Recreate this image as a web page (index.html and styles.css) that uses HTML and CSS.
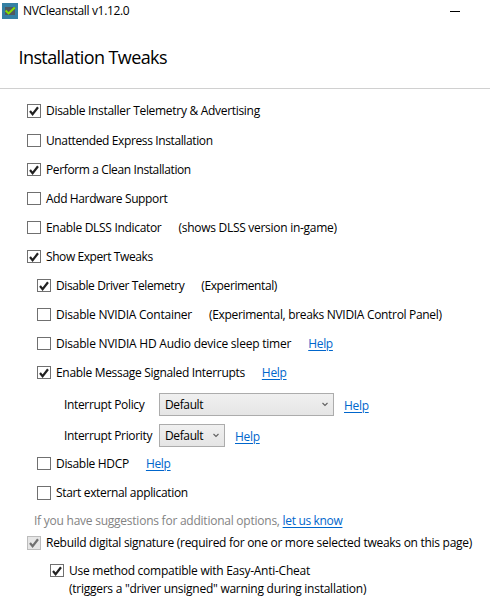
FILE: index.html
```
<!DOCTYPE html>
<html lang="en">
<head>
<meta charset="utf-8">
<title>NVCleanstall v1.12.0</title>
<link rel="stylesheet" href="styles.css">
</head>
<body>
<svg class="defs" width="0" height="0" aria-hidden="true">
  <symbol id="check" viewBox="0 0 12 12"><path d="M2 6 L4.6 9.2 L10 2.3" fill="none" stroke="currentColor" stroke-width="2.2"/></symbol>
  <symbol id="chevron" viewBox="0 0 6 5"><path d="M.5 1 L3 3.5 L5.5 1" fill="none" stroke="currentColor" stroke-width="1.1"/></symbol>
</svg>
<header class="titlebar">
  <svg class="app-icon" viewBox="0 0 16 16">
    <rect width="16" height="16" fill="#3480a4"/>
    <rect x="3" y="4" width="10" height="8" fill="#505860"/>
    <path d="M3.6 7.6 L6.6 10.4 L12.8 4.6" fill="none" stroke="#86e000" stroke-width="2"/>
  </svg>
  <span class="app-name t34">NVCleanstall v1.12.0</span>
  <span class="minimize"></span>
</header>
<h1 class="heading">Installation Tweaks</h1>
<main class="options">
  <div class="row first"><span class="box tall"><svg><use href="#check"/></svg></span><span class="t30">Disable Installer Telemetry &amp; Advertising</span></div>
  <div class="row"><span class="box"></span><span class="t38">Unattended Express Installation</span></div>
  <div class="row"><span class="box"><svg><use href="#check"/></svg></span><span class="t38">Perform a Clean Installation</span></div>
  <div class="row"><span class="box"></span><span class="t38">Add Hardware Support</span></div>
  <div class="row"><span class="box"></span><span class="t31">Enable DLSS Indicator</span><span class="note t28">(shows DLSS version in-game)</span></div>
  <div class="row"><span class="box"><svg><use href="#check"/></svg></span><span class="t42">Show Expert Tweaks</span></div>
  <section class="expert">
    <div class="row"><span class="box"><svg><use href="#check"/></svg></span><span class="t40">Disable Driver Telemetry</span><span class="note t40">(Experimental)</span></div>
    <div class="row"><span class="box"></span><span class="t24">Disable NVIDIA Container</span><span class="note t31">(Experimental, breaks NVIDIA Control Panel)</span></div>
    <div class="row"><span class="box"></span><span class="t22">Disable NVIDIA HD Audio device sleep timer</span><a class="note t31">Help</a></div>
    <div class="row"><span class="box"><svg><use href="#check"/></svg></span><span class="t31">Enable Message Signaled Interrupts</span><a class="note t31">Help</a></div>
    <div class="interrupts">
      <div class="field"><span class="label t34">Interrupt Policy</span><span class="select wide"><span class="t38">Default</span><svg><use href="#chevron"/></svg></span><a class="t31">Help</a></div>
      <div class="field"><span class="label t34">Interrupt Priority</span><span class="select"><span class="t38">Default</span><svg><use href="#chevron"/></svg></span><a class="t31">Help</a></div>
    </div>
    <div class="row"><span class="box"></span><span class="t31">Disable HDCP</span><a class="note t31">Help</a></div>
    <div class="row external"><span class="box tall"></span><span class="t34">Start external application</span></div>
  </section>
  <p class="suggest"><span class="t24">If you have suggestions for additional options, </span><a class="t34">let us know</a></p>
  <div class="row signature"><span class="box tall disabled"><svg><use href="#check"/></svg></span><span class="t28">Rebuild digital signature (required for one or more selected tweaks on this page)</span></div>
  <div class="compat">
    <div class="row"><span class="box"><svg><use href="#check"/></svg></span><span class="t26">Use method compatible with Easy-Anti-Cheat</span></div>
    <p class="t26">(triggers a "driver unsigned" warning during installation)</p>
  </div>
</main>
</body>
</html>
```
FILE: styles.css
```
* { box-sizing: border-box; }
body {
  margin: 0;
  height: 610px;
  overflow: hidden;
  background: #fff;
  color: #000;
  font: 12px/18px "Open Sans", "Noto Sans", sans-serif;
  white-space: nowrap;
}
.defs { display: block; }
p { margin: 0; }
a { color: #0066cc; text-decoration: underline; text-underline-offset: 2px; text-decoration-thickness: 1px; }

/* Letter fitting, in hundredths of a pixel */
.t22 { letter-spacing: -0.22px; }
.t24 { letter-spacing: -0.24px; }
.t26 { letter-spacing: -0.26px; }
.t28 { letter-spacing: -0.28px; }
.t30 { letter-spacing: -0.3px; }
.t31 { letter-spacing: -0.315px; }
.t34 { letter-spacing: -0.34px; }
.t38 { letter-spacing: -0.38px; }
.t40 { letter-spacing: -0.4px; }
.t42 { letter-spacing: -0.42px; }

.titlebar { display: flex; align-items: center; height: 22px; padding: 0 30px 0 2px; }
.app-icon { width: 16px; height: 16px; margin-right: 5px; }
.minimize { width: 10px; height: 1px; margin-left: auto; background: #000; }

.heading {
  margin: 0;
  height: 67px;
  padding: 21px 0 0 18.5px;
  border-bottom: 1px solid #d0d0d0;
  font-size: 18px;
  font-weight: 400;
  line-height: 28px;
  letter-spacing: -0.59px;
}

.options { padding: 8px 0 0 27px; }
.row { display: flex; align-items: center; height: 29px; }
.first { height: 28px; margin-bottom: 1px; }
.box {
  flex: none;
  width: 14px;
  height: 13px;
  margin-right: 5px;
  border: 1px solid #707070;
  color: #212121;
}
.tall { height: 14px; }
.box svg { display: block; width: 12px; height: 12px; margin-top: -0.5px; }
.disabled { background: #e6e6e6; border-color: #bcbcbc; color: #707070; }
.note { margin-left: 17px; }

.expert { padding-left: 10px; }
.interrupts { display: grid; gap: 8px; padding: 6px 0 2px 27px; }
.field { display: flex; align-items: center; height: 23px; }
.label { width: 95px; }
.select {
  display: flex;
  align-items: center;
  justify-content: space-between;
  width: 66px;
  height: 23px;
  margin-right: 10px;
  padding: 0 5px;
  border: 1px solid #acacac;
  background: linear-gradient(#f0f0f0, #e5e5e5);
}
.wide { width: 175px; }
.select svg { width: 6px; height: 5px; color: #606060; }
.field a { padding-top: 2px; }

.external { height: 30px; }
.suggest { height: 26px; padding-left: 7px; line-height: 26px; color: #838383; }
.signature { height: 18px; }
.compat { padding: 10px 0 0 23px; }
.compat .row { height: 17px; }
.compat p { padding: 1px 0 0 19px; }
```
